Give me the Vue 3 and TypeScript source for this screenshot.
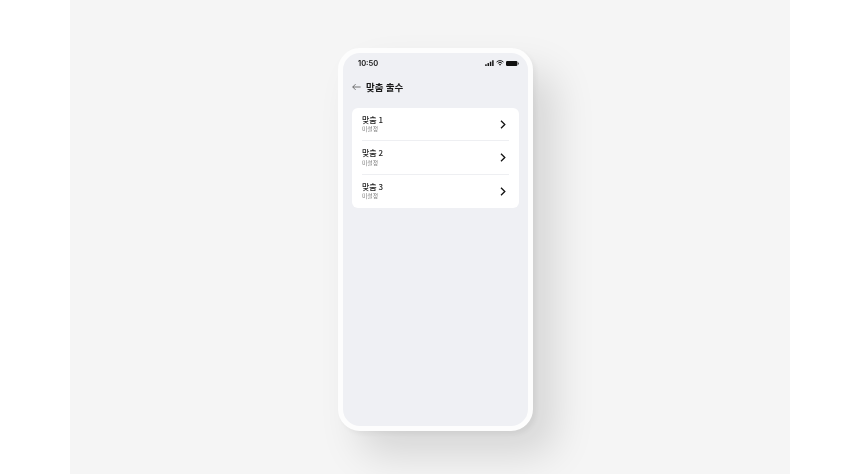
<script setup lang="ts">
const rows: string[] = ['맞춤 1', '맞춤 2', '맞춤 3']
</script>

<template>
  <div class="page">
    <div class="stage">
      <div class="phone">
        <div class="status">
          <span class="time">10:50</span>
          <div class="status-icons">
            <svg width="9" height="6" viewBox="0 0 10 7"><rect x="0" y="5" width="1.7" height="2" fill="#111"/><rect x="2.7" y="3.6" width="1.7" height="3.4" fill="#111"/><rect x="5.4" y="2" width="1.7" height="5" fill="#111"/><rect x="8.1" y="0.3" width="1.7" height="6.7" fill="#111"/></svg>
            <svg width="8" height="6" viewBox="0 0 9 7"><path d="M0.5 2.4a5.6 5.6 0 0 1 8 0M2 3.9a3.5 3.5 0 0 1 5 0" fill="none" stroke="#111" stroke-width="1.1"/><path d="M3.3 5.1a1.7 1.7 0 0 1 2.4 0L4.5 6.6z" fill="#111"/></svg>
            <svg width="13" height="5" viewBox="0 0 13 5"><rect x="0" y="0" width="11.4" height="5" rx="1.2" fill="#111"/><rect x="11.9" y="1.6" width="1.1" height="1.8" rx="0.5" fill="#555"/></svg>
          </div>
        </div>
        <div class="header">
          <svg width="9" height="8" viewBox="0 0 10 8"><path d="M9.6 4H0.8M4 0.8L0.8 4L4 7.2" fill="none" stroke="#555" stroke-width="0.9"/></svg>
          <span class="title">맞춤 출수</span>
        </div>
        <div class="card">
          <div v-for="name in rows" :key="name" class="row">
            <div class="labels">
              <span class="name">{{ name }}</span>
              <span class="sub">미설정</span>
            </div>
            <svg width="6" height="9" viewBox="0 0 6 9"><path d="M1 0.8L4.8 4.5L1 8.2" fill="none" stroke="#111" stroke-width="1.3"/></svg>
          </div>
        </div>
      </div>
    </div>
  </div>
</template>

<style>
html, body { margin: 0; background: #fff; }
</style>

<style scoped>
.page {
  width: 860px;
  height: 474px;
  overflow: hidden;
  background: #fff;
  font-family: "Noto Sans CJK KR", "Noto Sans", sans-serif;
}
.stage {
  width: 720px;
  height: 474px;
  margin-left: 70px;
  padding: 48px 0 0 268px;
  box-sizing: border-box;
  background: #f5f5f5;
  overflow: hidden;
}
.phone {
  width: 185px;
  height: 373px;
  border: 5px solid #fdfdfd;
  border-radius: 22px;
  background: #eff0f4;
  box-shadow: 22px 24px 40px rgba(0, 0, 0, 0.13), 3px 3px 6px rgba(0, 0, 0, 0.05);
  display: flex;
  flex-direction: column;
  filter: blur(0.3px);
}
.status {
  height: 20px;
  padding: 0 9px 0 15px;
  display: flex;
  align-items: center;
  justify-content: space-between;
}
.time {
  font-family: Inter, sans-serif;
  font-size: 7.5px;
  font-weight: 600;
  color: #111;
}
.status-icons {
  display: flex;
  align-items: center;
  gap: 2px;
}
.header {
  margin-top: 4px;
  height: 20px;
  padding-left: 9px;
  display: flex;
  align-items: center;
  gap: 5px;
}
.title {
  font-size: 9.5px;
  font-weight: 700;
  color: #1a1a1a;
}
.card {
  margin: 11px 9px 0;
  padding: 0 10px;
  background: #fff;
  border-radius: 6px;
}
.row {
  height: 33.3px;
  box-sizing: border-box;
  display: flex;
  align-items: center;
  justify-content: space-between;
  padding-right: 3px;
}
.row:not(:last-child) {
  border-bottom: 1px solid #eeeff2;
}
.labels {
  display: flex;
  flex-direction: column;
  margin-top: -1px;
}
.name {
  font-size: 8px;
  line-height: 11.6px;
  font-weight: 500;
  color: #222;
}
.sub {
  font-size: 5.8px;
  line-height: 8.4px;
  color: #777;
}
</style>
